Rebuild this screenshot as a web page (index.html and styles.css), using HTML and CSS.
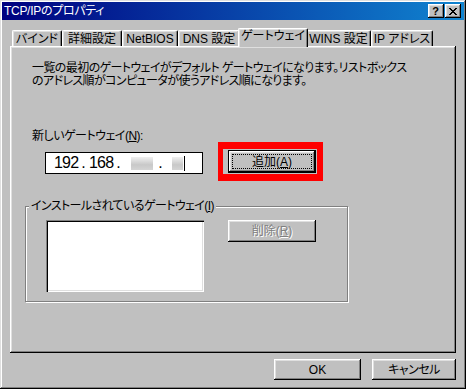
FILE: index.html
```html
<!DOCTYPE html>
<html lang="ja">
<head>
<meta charset="utf-8">
<title>TCP/IPのプロパティ</title>
<link rel="stylesheet" href="styles.css">
</head>
<body>
<div class="window">
  <div class="titlebar">
    <span class="title">TCP/IPのプロパティ</span>
    <div class="caption-btns">
      <div class="cap-btn help">?</div>
      <div class="cap-btn close">
        <svg width="8" height="7" viewBox="0 0 8 7" shape-rendering="crispEdges"><path fill="#000" d="M0 0h2v1H0z M6 0h2v1H6z M1 1h2v1H1z M5 1h2v1H5z M2 2h4v1H2z M3 3h2v1H3z M2 4h4v1H2z M1 5h2v1H1z M5 5h2v1H5z M0 6h2v1H0z M6 6h2v1H6z"/></svg>
      </div>
    </div>
  </div>
  <div class="content">
    <div class="tabs">
      <div class="tab">バインド</div>
      <div class="tab">詳細設定</div>
      <div class="tab">NetBIOS</div>
      <div class="tab">DNS 設定</div>
      <div class="tab active">ゲートウェイ</div>
      <div class="tab">WINS 設定</div>
      <div class="tab">IP アドレス</div>
    </div>
    <div class="panel">
      <div class="desc">
        <div class="desc-line">一覧の最初のゲートウェイがデフォルト ゲートウェイになります。リストボックス</div>
        <div class="desc-line">のアドレス順がコンピュータが使うアドレス順になります。</div>
      </div>
      <div class="label">新しいゲートウェイ(<u>N</u>):</div>
      <div class="ip-row">
        <div class="ip-box">
          <span class="seg">192</span><span class="dot">.</span><span class="seg">168</span><span class="dot">.</span><span class="blur b1"></span><span class="dot d3">.</span><span class="blur b2"></span><span class="caret"></span>
        </div>
        <div class="highlight">
          <div class="btn default"><span class="focus">追加(<u>A</u>)</span></div>
        </div>
      </div>
      <fieldset class="group">
        <legend>インストールされているゲートウェイ(<u>I</u>)</legend>
        <div class="group-body">
          <div class="listbox"></div>
          <div class="btn disabled">削除(<u>R</u>)</div>
        </div>
      </fieldset>
    </div>
    <div class="footer">
      <div class="btn ok">OK</div>
      <div class="btn cancel">キャンセル</div>
    </div>
  </div>
</div>
</body>
</html>
```
FILE: styles.css
```css
* { box-sizing: border-box; }
html, body { margin: 0; padding: 0; background: #c0c0c0; }
body {
  font-family: "Liberation Sans", "Noto Sans CJK JP", sans-serif;
  font-size: 12px;
  line-height: 12px;
  color: #000;
  font-feature-settings: "palt";
}
.window {
  width: 466px;
  height: 389px;
  padding: 2px;
  background: #c0c0c0;
  box-shadow: inset -1px -1px #000, inset 1px 1px #dfdfdf, inset -2px -2px #808080, inset 2px 2px #fff;
  display: flex;
  flex-direction: column;
}
.titlebar {
  height: 18px;
  flex: none;
  background: linear-gradient(to right, #000080, #1084d0);
  display: flex;
  align-items: center;
  justify-content: space-between;
  padding: 0 3px 0 2px;
}
.title { color: #fff; font-size: 12px; line-height: 12px; letter-spacing: -0.3px; }
.caption-btns { display: flex; gap: 1px; }
.cap-btn {
  width: 16px;
  height: 14px;
  background: #c0c0c0;
  box-shadow: inset -1px -1px #000, inset 1px 1px #fff, inset -2px -2px #808080, inset 2px 2px #dfdfdf;
  display: flex;
  align-items: center;
  justify-content: center;
}
.cap-btn.help { font-weight: bold; font-size: 11px; line-height: 11px; padding-top: 1px; padding-right: 1px; }
.cap-btn.close { padding-right: 1px; }
.cap-btn svg { display: block; }

.content { padding: 8px 8px 0 8px; display: flex; flex-direction: column; }
.tabs { display: flex; align-items: flex-end; height: 18px; padding-left: 2px; }
.tab {
  height: 16px;
  border-top: 1px solid #fff;
  border-left: 1px solid #fff;
  border-right: 1px solid #000;
  border-radius: 2px 2px 0 0;
  box-shadow: inset -1px 0 #808080, inset 1px 1px #dfdfdf;
  background: #c0c0c0;
  text-align: center;
  padding-top: 2px;
  white-space: nowrap;
}
.tab:nth-child(1) { width: 50px; }
.tab:nth-child(2) { width: 60px; }
.tab:nth-child(3) { width: 56px; }
.tab:nth-child(4) { width: 62px; }
.tab:nth-child(5) { width: 70px; }
.tab:nth-child(6) { width: 65px; }
.tab:nth-child(7) { width: 62px; }
.tab.active {
  height: 19px;
  margin: 0 -2px -1px -2px;
  position: relative;
  z-index: 1;
  padding-top: 1px;
}

.panel {
  height: 307px;
  box-shadow: inset -1px -1px #000, inset 1px 1px #fff, inset -2px -2px #808080, inset 2px 2px #dfdfdf;
  display: flex;
  flex-direction: column;
  align-items: flex-start;
}
.desc { margin: 16px 0 0 22px; letter-spacing: -0.6px; white-space: nowrap; }
.desc-line { height: 13px; line-height: 13px; }
.label { margin: 42px 0 0 22px; letter-spacing: -0.5px; }
.ip-row { display: flex; align-items: flex-start; margin-left: 35px; }
.ip-box {
  margin-top: 10px;
  width: 158px;
  height: 22px;
  border: 1px solid #000;
  background: #fff;
  display: flex;
  align-items: center;
  padding-left: 7px;
  font-size: 16px;
  line-height: 16px;
}
.seg { width: 24px; text-align: center; letter-spacing: -0.8px; text-indent: 1px; }
.dot { width: 11px; text-align: center; padding-left: 2px; }
.dot.d3 { width: 13px; }
.blur { height: 13px; background: linear-gradient(#f0f0f0, #c8c8c8 60%, #d4d4d4); }
.blur.b1 { width: 22px; margin-left: 8px; }
.blur.b2 { width: 11px; margin-left: 6px; }
.caret { width: 1px; height: 15px; background: #000; margin-left: 1px; }

.highlight {
  margin-left: 15px;
  border-style: solid;
  border-color: #ff0000;
  border-width: 7px 6px 7px 5px;
  padding: 1px 1px 1px 5px;
}
.btn {
  background: #c0c0c0;
  box-shadow: inset -1px -1px #000, inset 1px 1px #fff, inset -2px -2px #808080, inset 2px 2px #dfdfdf;
  display: flex;
  align-items: center;
  justify-content: center;
  white-space: nowrap;
}
.btn.default {
  width: 88px;
  height: 23px;
  padding: 4px;
  box-shadow: inset 0 0 0 1px #000, inset -2px -2px #000, inset 2px 2px #fff, inset -3px -3px #808080, inset 3px 3px #dfdfdf;
}
.focus {
  flex: 1;
  align-self: stretch;
  border: 1px dotted #000;
  display: flex;
  align-items: center;
  justify-content: center;
  padding-top: 1px;
}
.group {
  margin: 19px 0 0 15px;
  width: 323px;
  padding: 0 0 9px 3px;
  border: 1px solid #808080;
  box-shadow: 1px 1px 0 #fff, inset 1px 1px 0 #fff;
  min-width: 0;
}
.group legend {
  padding: 0 2px;
  line-height: 12px;
  background: #c0c0c0;
  letter-spacing: -0.6px;
}
.group-body { display: flex; align-items: flex-start; margin: 8px 0 0 17px; }
.listbox {
  width: 158px;
  height: 72px;
  background: #fff;
  box-shadow: inset 1px 1px #808080, inset 2px 2px #000, inset -1px -1px #fff, inset -2px -2px #dfdfdf;
}
.btn.disabled {
  margin-left: 24px;
  width: 88px;
  height: 22px;
  color: #808080;
  text-shadow: 1px 1px 0 #fff;
}
.footer { display: flex; justify-content: flex-end; gap: 11px; margin-top: 6px; }
.footer .btn { height: 21px; }
.btn.ok { width: 87px; }
.btn.cancel { width: 84px; letter-spacing: -0.5px; }
```
